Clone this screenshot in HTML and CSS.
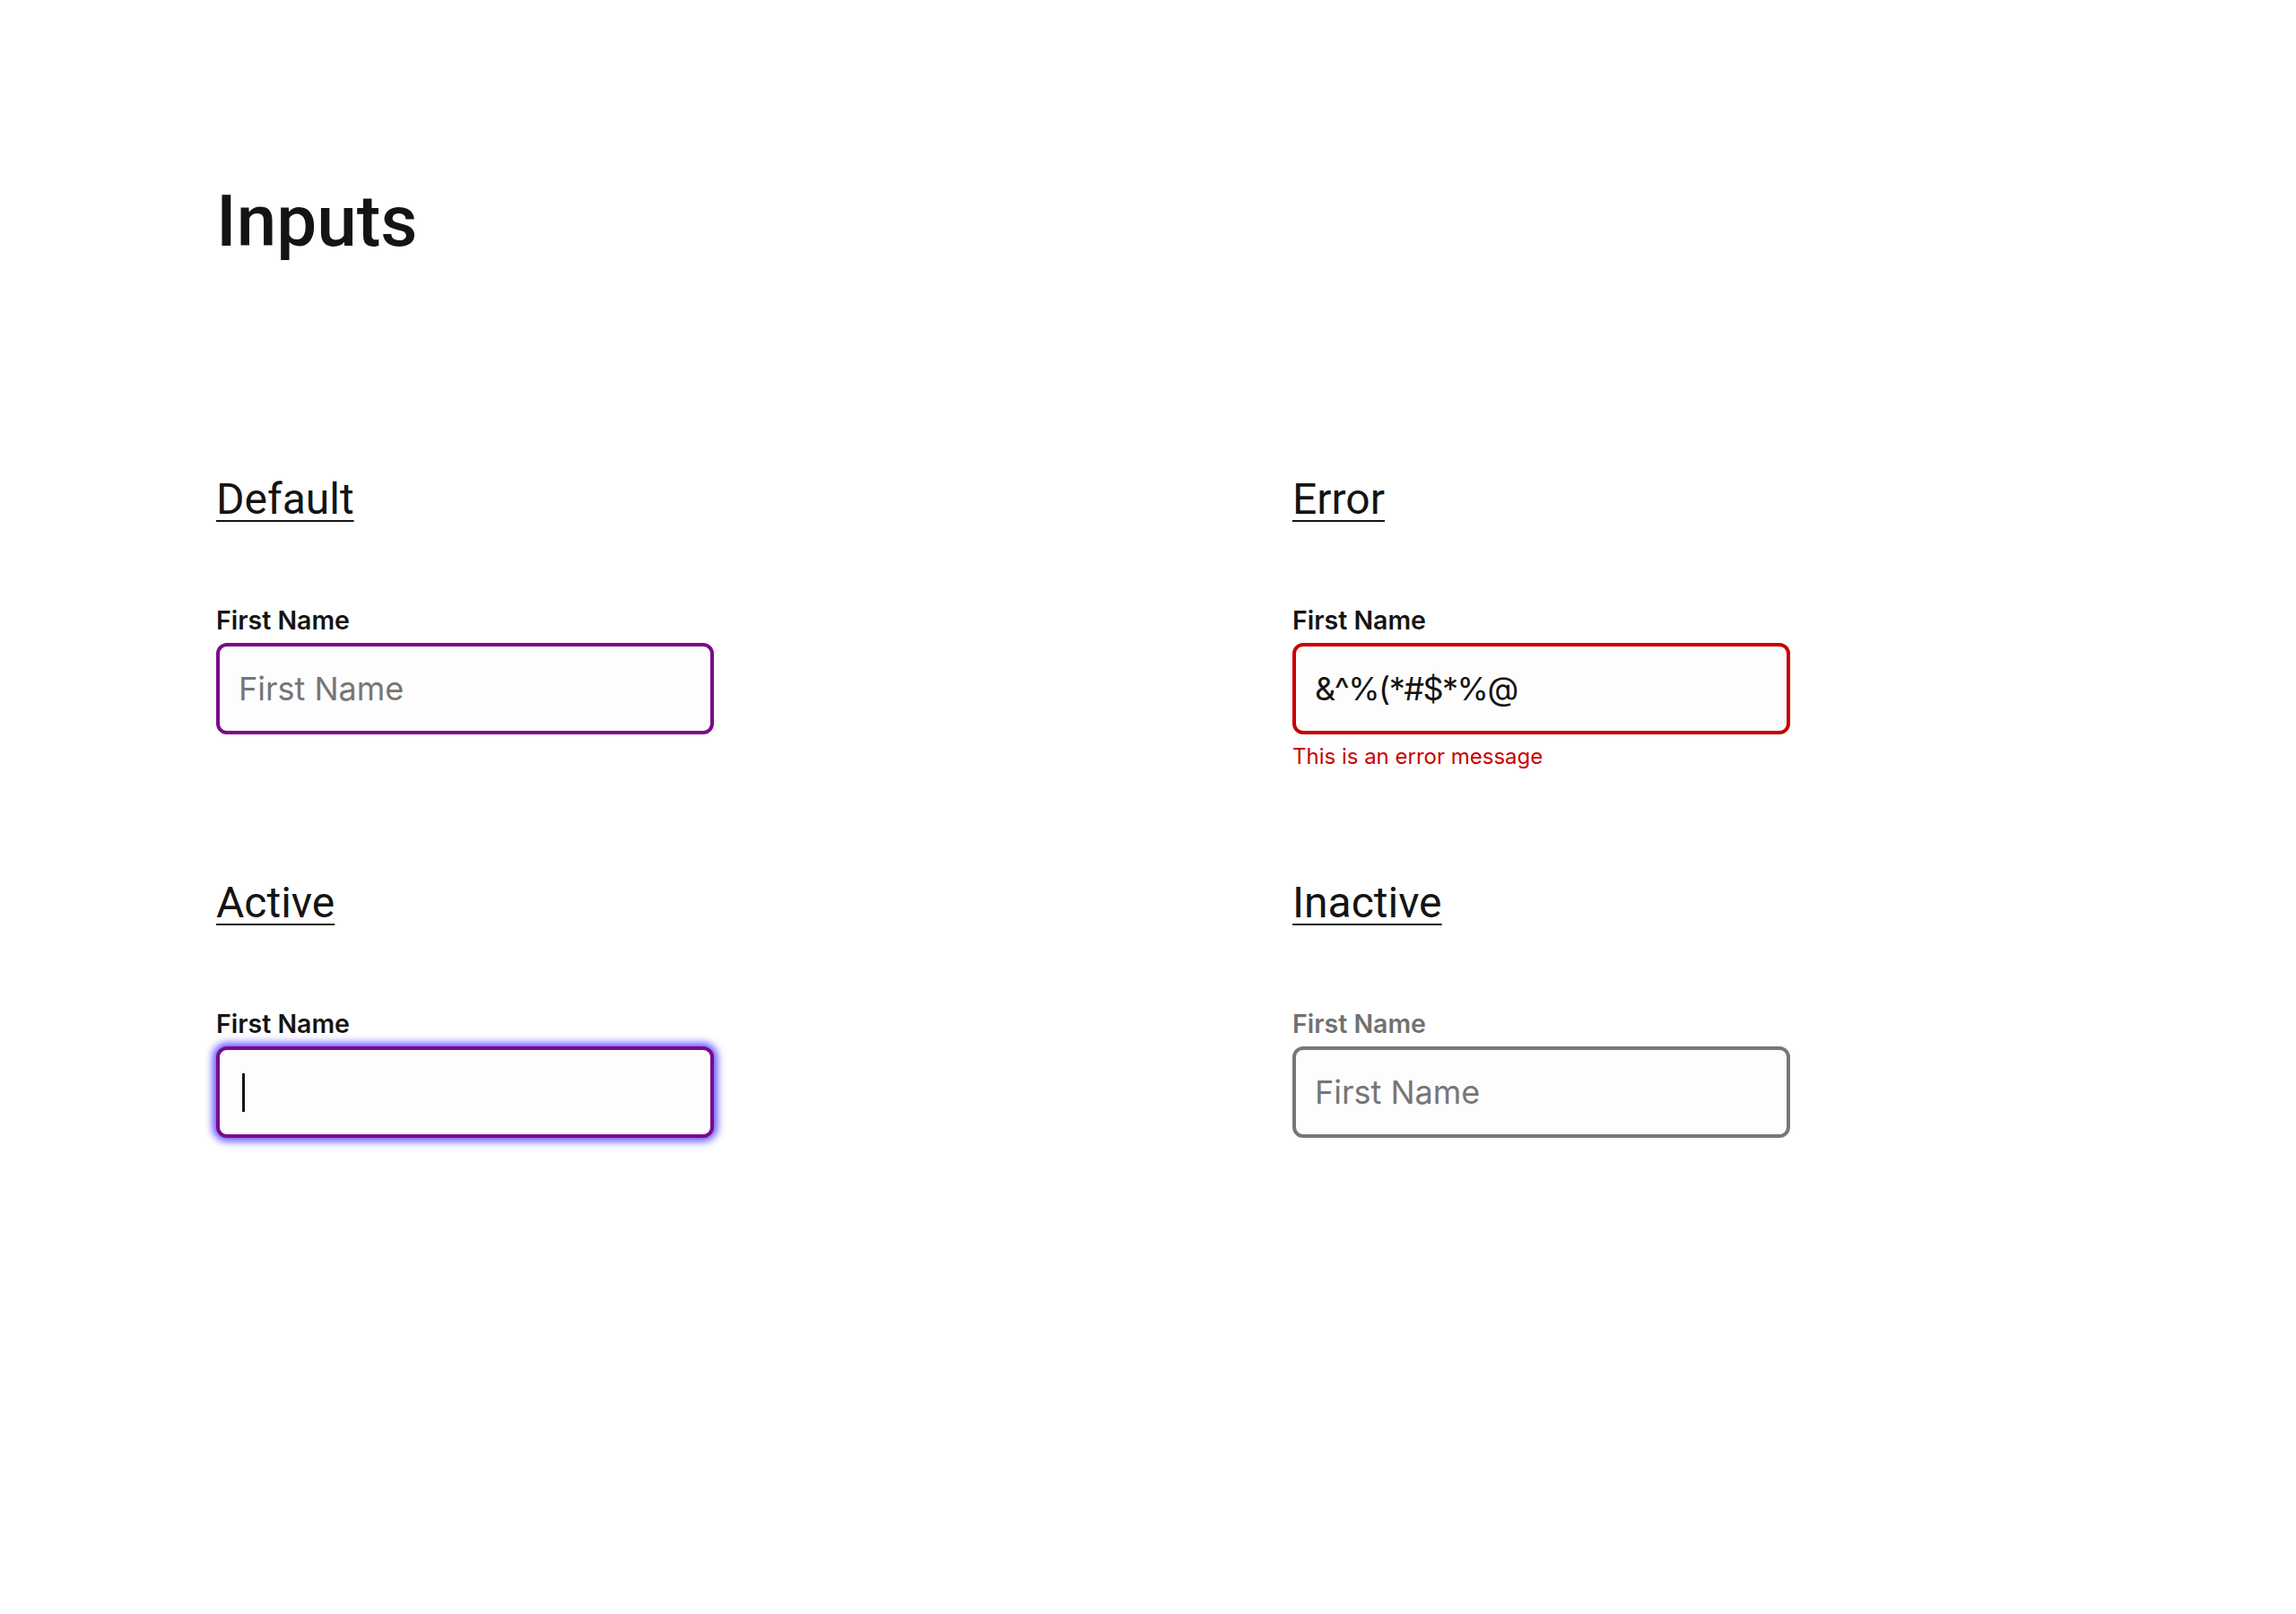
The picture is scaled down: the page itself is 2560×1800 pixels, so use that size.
FILE: index.html
```html
<!DOCTYPE html>
<html lang="en">
<head>
<meta charset="utf-8">
<title>Inputs</title>
<link rel="stylesheet" href="styles.css">
</head>
<body>
<main class="page">
  <h1 class="title">Inputs</h1>
  <div class="grid">
    <section class="cell">
      <h2 class="state">Default</h2>
      <label class="label" for="f-default">First Name</label>
      <input class="field field--default" id="f-default" type="text" placeholder="First Name">
    </section>
    <section class="cell">
      <h2 class="state">Error</h2>
      <label class="label" for="f-error">First Name</label>
      <input class="field field--error" id="f-error" type="text" value="&amp;^%(*#$*%@">
      <p class="error-msg">This is an error message</p>
    </section>
    <section class="cell">
      <h2 class="state">Active</h2>
      <span class="label">First Name</span>
      <div class="field field--active" role="textbox"><span class="caret"></span></div>
    </section>
    <section class="cell">
      <h2 class="state">Inactive</h2>
      <label class="label label--inactive" for="f-inactive">First Name</label>
      <input class="field field--inactive" id="f-inactive" type="text" placeholder="First Name" disabled>
    </section>
  </div>
</main>
</body>
</html>
```

FILE: styles.css
```css
* { box-sizing: border-box; }
html, body { margin: 0; padding: 0; background: #ffffff; }
body { color: #141414; font-family: Inter, "Noto Sans", sans-serif; }

.page {
  padding: 200px 0 0 241px;
}

.title {
  margin: 0;
  font-family: Roboto, "Liberation Sans", sans-serif;
  font-weight: 500;
  font-size: 80px;
  line-height: normal;
  color: #141414;
}

.grid {
  margin-top: 234px;
  display: grid;
  grid-template-columns: 1200px 1200px;
  grid-auto-rows: 450px;
}

.cell {
  display: flex;
  flex-direction: column;
  align-items: flex-start;
}

.state {
  margin: 0;
  font-family: Roboto, "Liberation Sans", sans-serif;
  font-weight: 400;
  font-size: 48px;
  line-height: normal;
  color: #141414;
  text-decoration: underline;
  text-decoration-thickness: 2px;
  text-underline-offset: 7px;
}

.label {
  margin-top: 89px;
  font-family: Inter, sans-serif;
  font-weight: 600;
  font-size: 28.5px;
  line-height: normal;
  color: #141414;
}
.label--inactive { color: #717171; }

.field {
  margin-top: 8px;
  width: 555px;
  height: 102px;
  border: 4px solid #7a0a8a;
  border-radius: 12px;
  background: #fdfdfd;
  padding: 0 21px;
  font-family: Inter, sans-serif;
  font-size: 36px;
  color: #141414;
  outline: none;
  display: flex;
  align-items: center;
}
.field::placeholder { color: #767676; opacity: 1; }
.field--error { border-color: #c80000; letter-spacing: -1.5px; }
.field--inactive { border-color: #777777; }
.field--inactive:disabled { background: #fdfdfd; color: #767676; }
.field--active {
  border-color: #7a0a8a;
  box-shadow: 0 0 9px 4px rgba(82, 70, 255, 0.9);
}

.caret {
  display: block;
  width: 3px;
  height: 43px;
  margin-left: 4px;
  background: #141414;
}

.error-msg {
  margin: 10px 0 0;
  font-family: Inter, sans-serif;
  font-size: 24px;
  line-height: normal;
  color: #c80000;
}
```
